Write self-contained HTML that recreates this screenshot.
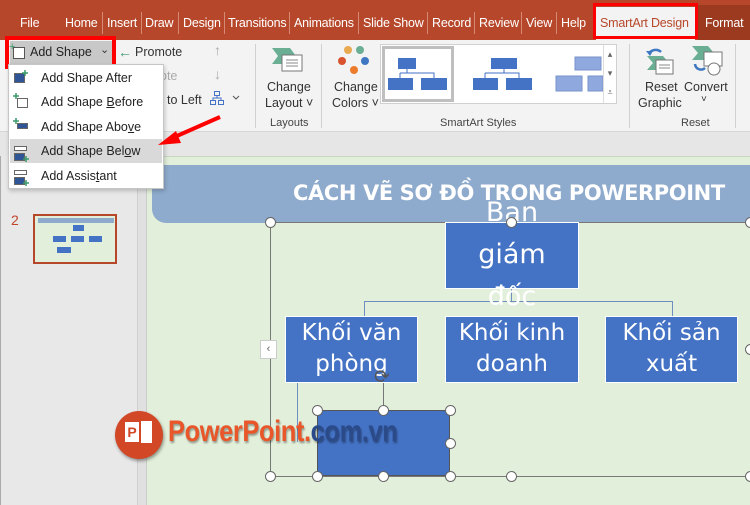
<!DOCTYPE html>
<html><head><meta charset="utf-8"><style>
*{margin:0;padding:0;box-sizing:border-box}
body{width:750px;height:505px;overflow:hidden;position:relative;font-family:"Liberation Sans",sans-serif;background:#e6e6e6}
.a{position:absolute}
.t{position:absolute;color:#fff;font-size:12.5px;top:16px;white-space:nowrap;letter-spacing:-0.2px}
.sep{position:absolute;top:12px;width:1px;height:22px;background:#d48a74}
.r{position:absolute;font-size:12.5px;color:#333;white-space:nowrap}
.gl{position:absolute;font-size:11px;color:#444;white-space:nowrap}
.vs{position:absolute;width:1px;background:#d0d0d0;top:44px;height:84px}
.mi{position:absolute;left:10px;width:152px;height:24px;font-size:12.5px;color:#222;line-height:24px;padding-left:31px}
.box{position:absolute;background:#4472c4;border:1px solid #fff;color:#fff;font-family:"DejaVu Sans",sans-serif;font-size:23px;text-align:center;line-height:31px}
.h{position:absolute;width:11px;height:11px;border-radius:50%;background:#fff;border:1.5px solid #666;margin:-5.5px 0 0 -5.5px}
.ln{position:absolute;background:#6d8ebf}
</style></head><body>
<div class="a" style="left:0;top:0;width:750px;height:40px;background:#b7472a"></div>
<div class="t" style="left:20px">File</div>
<div class="t" style="left:65px">Home</div><div class="sep" style="left:102px"></div>
<div class="t" style="left:107px">Insert</div><div class="sep" style="left:141px"></div>
<div class="t" style="left:145px">Draw</div><div class="sep" style="left:178px"></div>
<div class="t" style="left:183px">Design</div><div class="sep" style="left:224px"></div>
<div class="t" style="left:228px">Transitions</div><div class="sep" style="left:289px"></div>
<div class="t" style="left:294px">Animations</div><div class="sep" style="left:358px"></div>
<div class="t" style="left:363px">Slide Show</div><div class="sep" style="left:427px"></div>
<div class="t" style="left:432px">Record</div><div class="sep" style="left:474px"></div>
<div class="t" style="left:479px">Review</div><div class="sep" style="left:521px"></div>
<div class="t" style="left:526px">View</div><div class="sep" style="left:556px"></div>
<div class="t" style="left:561px">Help</div>
<div class="a" style="left:596px;top:7px;width:99px;height:33px;background:#f3f3f3"></div>
<div class="t" style="left:600px;color:#b7472a">SmartArt Design</div>
<div class="a" style="left:593px;top:3px;width:105px;height:36px;border:3px solid #f00"></div>
<div class="a" style="left:698px;top:5px;width:52px;height:35px;background:#9c3a20"></div>
<div class="t" style="left:705px">Format</div>
<div class="a" style="left:0;top:40px;width:750px;height:92px;background:#f3f3f3;border-bottom:1px solid #d6d6d6"></div>
<div class="a" style="left:10px;top:41px;width:102px;height:23px;background:#c8c8c8"></div>
<div class="a" style="left:13px;top:47px;width:12px;height:12px;border:1px solid #555;background:#fff"></div>
<div class="a" style="left:9px;top:41px;color:#3a9a6a;font-size:11px">+</div>
<div class="r" style="left:30px;top:45px;color:#222">Add Shape</div>
<div class="r" style="left:100px;top:43px;font-size:11px">⌄</div>
<div class="a" style="left:5px;top:36px;width:111px;height:33px;border:4px solid #f00"></div>
<div class="r" style="left:118px;top:44px;color:#3a9a6a;font-size:14px">←</div>
<div class="r" style="left:135px;top:45px">Promote</div>
<div class="r" style="left:160px;top:69px;color:#aaa">ote</div>
<div class="r" style="left:167px;top:93px">to Left</div>
<div class="r" style="left:214px;top:42px;color:#aaa;font-size:14px">↑</div>
<div class="r" style="left:214px;top:66px;color:#aaa;font-size:14px">↓</div>
<svg class="a" style="left:210px;top:90px" width="34" height="16"><g fill="none" stroke="#4472c4"><rect x="4.5" y="1.5" width="5" height="4"/><rect x="0.5" y="10.5" width="5" height="4"/><rect x="8.5" y="10.5" width="5" height="4"/><path d="M7 5.5V8H3V10.5M7 8H11V10.5"/></g><path d="M23 6l3 3 3-3" stroke="#555" fill="none"/></svg>
<div class="vs" style="left:255px"></div>
<svg class="a" style="left:272px;top:46px" width="32" height="28"><path d="M0 2h18l6 8-6 8H0l6-8z" fill="#6aae94"/><rect x="10" y="9" width="20" height="16" fill="#fff" stroke="#777"/><path d="M14 14h12M14 17h12M14 20h12" stroke="#888"/></svg>
<div class="r" style="left:267px;top:80px">Change</div>
<div class="r" style="left:265px;top:96px">Layout ˅</div>
<div class="gl" style="left:270px;top:117px">Layouts</div>
<div class="vs" style="left:321px"></div>
<svg class="a" style="left:333px;top:45px" width="40" height="30"><circle cx="15" cy="5" r="4" fill="#e9a94f"/><circle cx="27" cy="5" r="4" fill="#6aae94"/><circle cx="9" cy="16" r="4" fill="#d9532f"/><circle cx="32" cy="16" r="4" fill="#3f78c2"/><circle cx="21" cy="25" r="4" fill="#ec7c2c"/></svg>
<div class="r" style="left:334px;top:80px">Change</div>
<div class="r" style="left:332px;top:96px">Colors ˅</div>
<div class="a" style="left:380px;top:44px;width:237px;height:60px;background:#fff;border:1px solid #d0d0d0"></div>
<div class="a" style="left:382px;top:46px;width:72px;height:56px;border:3px solid #bfbfbf"></div>
<svg class="a" style="left:388px;top:56px" width="215" height="36"><g fill="#4472c4"><rect x="10" y="2" width="18" height="11"/><rect x="0" y="22" width="25" height="12"/><rect x="33" y="22" width="26" height="12"/><rect x="103" y="2" width="26" height="11"/><rect x="85" y="22" width="25" height="12"/><rect x="118" y="22" width="26" height="12"/></g><g fill="#8fa8de" stroke="#7a93cc"><rect x="187" y="1" width="26" height="13"/><rect x="168" y="20" width="26" height="15"/><rect x="200" y="20" width="15" height="15"/></g><path d="M19 13v4M12 17h34v5M12 17v5M116 13v4M97 17h34v5M97 17v5" stroke="#4472c4" fill="none"/></svg>
<div class="a" style="left:603px;top:45px;width:13px;height:58px;border-left:1px solid #ddd;font-size:9px;color:#666;text-align:center;line-height:19px">▴<br>▾<br>⩡</div>
<div class="gl" style="left:440px;top:117px">SmartArt Styles</div>
<div class="vs" style="left:629px"></div>
<svg class="a" style="left:643px;top:44px" width="34" height="32"><path d="M4 12h16l6 7-6 7H4l6-7z" fill="#6aae94"/><rect x="13" y="16" width="17" height="14" fill="#fff" stroke="#777"/><path d="M16 21h11M16 24h11" stroke="#888"/><path d="M6 10a7 6 0 0 1 12-2" stroke="#3f78c2" stroke-width="2.5" fill="none"/><path d="M3 7l4 5 3-5z" fill="#3f78c2"/></svg>
<div class="r" style="left:645px;top:80px">Reset</div>
<div class="r" style="left:638px;top:96px">Graphic</div>
<svg class="a" style="left:690px;top:44px" width="36" height="32"><path d="M2 2h16l6 7-6 7H2l6-7z" fill="#6aae94"/><rect x="14" y="8" width="18" height="14" fill="#fff" stroke="#777"/><circle cx="24" cy="25" r="6" fill="#fff" stroke="#777"/><path d="M5 20a6 6 0 0 0 10 4" stroke="#3f78c2" stroke-width="2.5" fill="none"/></svg>
<div class="r" style="left:684px;top:80px">Convert</div>
<div class="r" style="left:701px;top:94px;font-size:10px">˅</div>
<div class="gl" style="left:681px;top:117px">Reset</div>
<div class="vs" style="left:735px"></div>
<div class="a" style="left:0;top:156px;width:137px;height:349px;background:#e8e8e8;border-left:1px solid #aaa"></div>
<div class="a" style="left:137px;top:156px;width:10px;height:349px;background:#e0e0e0;border-left:1px solid #d0d0d0;border-right:1px solid #ccc"></div>
<div class="a" style="left:11px;top:212px;color:#c0452a;font-size:14px">2</div>
<div class="a" style="left:33px;top:214px;width:84px;height:50px;border:2px solid #b7472a;background:#e2efda">
<div class="a" style="left:3px;top:2px;width:76px;height:5px;background:#8eaacc"></div>
<div class="a" style="left:38px;top:9px;width:11px;height:6px;background:#4472c4"></div>
<div class="a" style="left:18px;top:20px;width:13px;height:6px;background:#4472c4"></div>
<div class="a" style="left:36px;top:20px;width:13px;height:6px;background:#4472c4"></div>
<div class="a" style="left:54px;top:20px;width:13px;height:6px;background:#4472c4"></div>
<div class="a" style="left:22px;top:31px;width:14px;height:6px;background:#4472c4"></div></div>
<div class="a" style="left:147px;top:156px;width:603px;height:349px;background:#e2efda;border-top:1px solid #c8d8c0"></div>
<div class="a" style="left:152px;top:165px;width:598px;height:58px;background:#8eaacc;border-radius:0 0 0 14px"></div>
<div class="a" style="left:293px;top:181px;color:#fff;font-weight:bold;font-size:21px;font-family:'DejaVu Sans',sans-serif;letter-spacing:-0.4px;white-space:nowrap">CÁCH VẼ SƠ ĐỒ TRONG POWERPOINT</div>
<div class="a" style="left:270px;top:222px;width:481px;height:255px;border:1px solid #777"></div>
<div class="ln" style="left:364px;top:301px;width:309px;height:1px"></div>
<div class="ln" style="left:511px;top:288px;width:1px;height:14px"></div>
<div class="ln" style="left:364px;top:301px;width:1px;height:15px"></div>
<div class="ln" style="left:672px;top:301px;width:1px;height:15px"></div>
<div class="ln" style="left:297px;top:382px;width:1px;height:60px"></div>
<div class="a" style="left:383px;top:382px;width:1px;height:28px;background:#777"></div>
<div class="box" style="left:445px;top:222px;width:134px;height:67px"></div>
<div class="a" style="left:445px;top:192px;width:134px;color:#fff;font-family:'DejaVu Sans',sans-serif;font-size:27px;text-align:center;line-height:42px">Ban<br>giám<br>đốc</div>
<div class="box" style="left:285px;top:316px;width:133px;height:67px;padding-top:1px">Khối văn<br>phòng</div>
<div class="box" style="left:445px;top:316px;width:134px;height:67px;padding-top:1px">Khối kinh<br>doanh</div>
<div class="box" style="left:605px;top:316px;width:133px;height:67px;padding-top:1px">Khối sản<br>xuất</div>
<div class="a" style="left:317px;top:410px;width:133px;height:66px;background:#4472c4;border:1px solid #555"></div>
<div class="a" style="left:374px;top:366px;font-size:19px;color:#555">⟳</div>
<div class="h" style="left:270px;top:222px"></div><div class="h" style="left:511px;top:222px"></div><div class="h" style="left:750px;top:222px"></div>
<div class="h" style="left:750px;top:349px"></div>
<div class="h" style="left:270px;top:476px"></div><div class="h" style="left:511px;top:476px"></div><div class="h" style="left:750px;top:476px"></div>
<div class="h" style="left:317px;top:410px"></div><div class="h" style="left:383px;top:410px"></div><div class="h" style="left:450px;top:410px"></div>
<div class="h" style="left:450px;top:443px"></div>
<div class="h" style="left:317px;top:476px"></div><div class="h" style="left:383px;top:476px"></div><div class="h" style="left:450px;top:476px"></div>
<div class="a" style="left:260px;top:340px;width:17px;height:19px;background:#fff;border:1px solid #ccc;font-size:11px;color:#666;text-align:center;line-height:17px">‹</div>
<div class="a" style="left:115px;top:411px;width:48px;height:48px;border-radius:50%;background:#d24726;box-shadow:1px 2px 3px rgba(0,0,0,.4)"></div>
<div class="a" style="left:125px;top:422px;width:14px;height:20px;background:#fff;color:#d24726;font-weight:bold;font-size:14px;text-align:center;line-height:20px">P</div>
<div class="a" style="left:140px;top:420px;width:13px;height:24px;background:#fff;border:1px solid #d24726"></div>
<div class="a" style="left:168px;top:415px;font-family:'Liberation Sans Narrow','Liberation Sans',sans-serif;font-weight:bold;font-size:30px;letter-spacing:-0.5px;white-space:nowrap;text-shadow:1px 2px 2px rgba(0,0,0,.35);transform:scaleX(.85);transform-origin:left"><span style="color:#e8562a">PowerPoint.</span><span style="color:#2a4a8a">com.vn</span></div>
<div class="a" style="left:8px;top:64px;width:156px;height:125px;background:#fff;border:1px solid #c6c6c6;box-shadow:1px 2px 4px rgba(0,0,0,.2)"></div>
<div class="mi" style="top:66px">Add Shape After</div>
<div class="mi" style="top:90px">Add Shape <u>B</u>efore</div>
<div class="mi" style="top:115px">Add Shape Abo<u>v</u>e</div>
<div class="mi" style="top:139px;background:#d9d9d9">Add Shape Bel<u>o</u>w</div>
<div class="mi" style="top:164px">Add Assis<u>t</u>ant</div>
<svg class="a" style="left:12px;top:69px" width="18" height="118"><g fill="#2f5597" stroke="#666" stroke-width="1"><rect x="2.5" y="4.5" width="10" height="9"/><rect x="5.5" y="29.5" width="10" height="9" fill="#fff"/><rect x="5.5" y="54.5" width="10" height="5"/><rect x="2.5" y="77.5" width="12" height="4" fill="#fff"/><rect x="2.5" y="84.5" width="10" height="7"/><rect x="2.5" y="101.5" width="12" height="4" fill="#fff"/><rect x="2.5" y="108.5" width="10" height="7"/></g><g stroke="#3a9a6a" stroke-width="1.5"><path d="M13 1v6M10 4h6M4 24v6M1 27h6M4 49v6M1 52h6M14 87v6M11 90h6M14 111v6M11 114h6"/></g></svg>
<svg class="a" style="left:150px;top:112px" width="75" height="40"><path d="M70 5L20 27" stroke="#f00" stroke-width="4"/><path d="M8 33l18-14 5 12z" fill="#f00"/></svg>
</body></html>
